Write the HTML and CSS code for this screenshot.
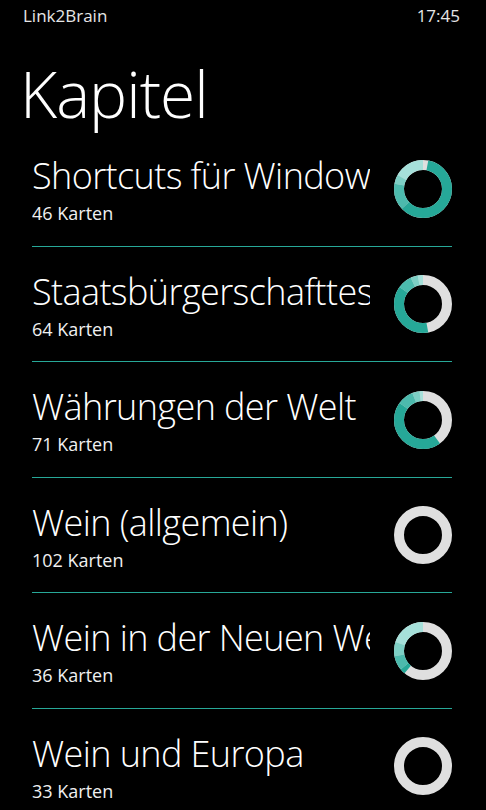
FILE: index.html
```html
<!DOCTYPE html>
<html lang="de">

<head>
	<meta charset="UTF-8">
	<meta name="viewport" content="width=device-width, initial-scale=1.0">
	<title>Kapitel</title>
	<link rel="stylesheet" href="styles.css">
</head>

<body>
	<div class="status">
		<span>Link2Brain</span>
		<span>17:45</span>
	</div>
	<h1 class="page-title">Kapitel</h1>
	<ul class="chapters" id="chapters"></ul>
	<script>
		(() => {
			// share of cards per level: light, light-medium, medium, dark (rest is grey)
			const chapters = [
				{ name: "Shortcuts für Windows", cards: 46, parts: [17, 5, 15, 60] },
				{ name: "Staatsbürgerschafttest", cards: 64, parts: [3, 4, 8, 38] },
				{ name: "Währungen der Welt", cards: 71, parts: [2, 4, 9, 45] },
				{ name: "Wein (allgemein)", cards: 102, parts: [0, 0, 0, 0] },
				{ name: "Wein in der Neuen Welt", cards: 36, parts: [20, 8, 8, 3] },
				{ name: "Wein und Europa", cards: 33, parts: [0, 0, 0, 0] }
			],
				levels = ["lvl1", "lvl2", "lvl3", "lvl4"],
				list = document.getElementById("chapters");

			function donut(parts) {
				let svg = '<svg class="donut" viewBox="-29 -29 58 58"><g transform="rotate(-90) scale(1,-1)">';
				svg += '<circle class="ring" r="24" pathLength="100"></circle>';
				let start = 0;
				for (let i = 0; i < parts.length; i++) {
					if (parts[i] > 0) {
						svg += '<circle class="' + levels[i] + '" r="24" pathLength="100" stroke-dasharray="' +
							parts[i] + ' 100" stroke-dashoffset="' + (-start) + '"></circle>';
					}
					start += parts[i];
				}
				return svg + '</g></svg>';
			}

			for (let i = 0; i < chapters.length; i++) {
				let c = chapters[i],
					li = document.createElement("li");
				li.className = "chapter";
				li.innerHTML = '<div class="chapter-text"><div class="chapter-name">' + c.name +
					'</div><div class="chapter-count">' + c.cards + ' Karten</div></div>' + donut(c.parts);
				list.appendChild(li);
			}
		})()
	</script>
</body>

</html>
```

FILE: styles.css
```css
body {
	margin: 0;
	background: #000;
	color: #fff;
	font-family: "Open Sans", sans-serif;
	overflow: hidden;
}

.status {
	display: flex;
	justify-content: space-between;
	height: 32px;
	line-height: 32px;
	padding: 0 26px 0 23px;
	font-size: 17px;
	color: #e6e6e6;
}

.page-title {
	margin: 26px 0 0 20px;
	height: 72px;
	font-size: 64px;
	line-height: 72px;
	font-weight: 300;
	letter-spacing: -1px;
}

.chapters {
	list-style: none;
	margin: 0;
	padding: 1px 34px 0 32px;
}

.chapter {
	display: flex;
	align-items: center;
	height: 116px;
	box-sizing: border-box;
	border-bottom: 1px solid #27a898;
}

.chapter:nth-child(even) {
	height: 115px;
}

.chapter-text {
	flex: 1;
	min-width: 0;
	overflow: hidden;
	white-space: nowrap;
	align-self: flex-start;
	padding-top: 25px;
	margin-right: 24px;
}

.chapter-name {
	font-size: 36px;
	line-height: 40px;
	font-weight: 300;
	letter-spacing: -0.6px;
}

.chapter-count {
	margin-top: 5px;
	font-size: 18px;
	line-height: 24px;
	color: #f0f0f0;
}

.donut {
	width: 58px;
	height: 58px;
	flex: none;
}

.donut circle {
	fill: none;
	stroke-width: 10;
}

.donut .ring {
	stroke: #dfdfdf;
}

.donut .lvl1 {
	stroke: #a6e0da;
}

.donut .lvl2 {
	stroke: #7dcfc5;
}

.donut .lvl3 {
	stroke: #4cbaad;
}

.donut .lvl4 {
	stroke: #26a898;
}
```
